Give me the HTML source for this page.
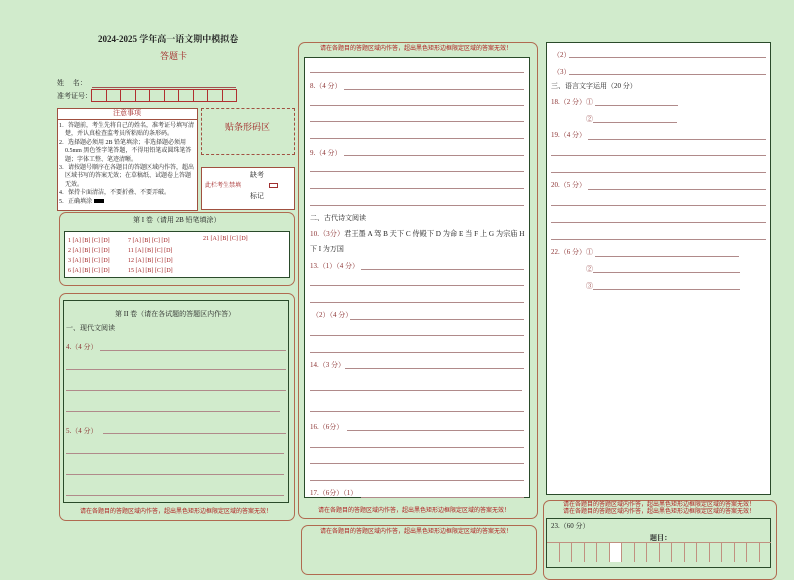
<!DOCTYPE html>
<html><head><meta charset="utf-8"><style>
*{margin:0;padding:0;box-sizing:border-box}
html,body{width:794px;height:562px}
body{background:#d1ebcc;position:relative;overflow:hidden;font-family:"Liberation Serif","Noto Serif CJK SC","Noto Sans CJK SC",serif;font-size:7px;color:#222}
.a{position:absolute;white-space:nowrap;line-height:1}
.r{color:#a02020}
.q{color:#8a3030}
.l{position:absolute;height:1px;background:#b08a8a}
.rb{position:absolute;border:1px solid #b06a50;border-radius:7px}
.wb{position:absolute;background:#fff;border:1px solid #2a4a2a}
.s{font-size:6px;color:#b02020;font-family:"Noto Sans CJK SC",sans-serif}
</style></head><body>
<div class="a" style="left:98px;top:35px;font-size:9px;font-weight:bold">2024-2025 学年高一语文期中模拟卷</div>
<div class="a r" style="left:160px;top:52px;font-size:9px">答题卡</div>
<div class="a" style="left:57px;top:80px">姓　 名：</div>
<div style="position:absolute;left:92px;top:87px;width:144px;height:1px;background:#a05050"></div>
<div class="a" style="left:57px;top:93px">准考证号：</div>
<div style="position:absolute;left:91px;top:89px;width:146px;height:13px;border:1px solid #b03030;display:flex">
<div style="flex:1;border-right:1px solid #b03030"></div><div style="flex:1;border-right:1px solid #b03030"></div><div style="flex:1;border-right:1px solid #b03030"></div><div style="flex:1;border-right:1px solid #b03030"></div><div style="flex:1;border-right:1px solid #b03030"></div><div style="flex:1;border-right:1px solid #b03030"></div><div style="flex:1;border-right:1px solid #b03030"></div><div style="flex:1;border-right:1px solid #b03030"></div><div style="flex:1;border-right:1px solid #b03030"></div><div style="flex:1"></div></div>
<div style="position:absolute;left:57px;top:108px;width:141px;height:103px;background:#fff;border:1px solid #a05040"></div>
<div style="position:absolute;left:57px;top:119px;width:141px;height:1px;background:#a05040"></div>
<div class="a r" style="left:113px;top:110px;font-size:7px">注意事项</div>
<div class="a" style="left:59px;top:122px;font-size:6px;line-height:8.4px;white-space:normal;width:140px">1．答题前，考生先将自己的姓名，准考证号填写清<br>　楚，并认真检查监考员所粘贴的条形码。<br>2．选择题必须用 2B 铅笔填涂；非选择题必须用<br>　0.5mm 黑色签字笔答题，不得用铅笔或圆珠笔答<br>　题；字体工整、笔迹清晰。<br>3．请按题号顺序在各题目的答题区域内作答，超出<br>　区域书写的答案无效；在草稿纸、试题卷上答题<br>　无效。<br>4．保持卡面清洁，不要折叠、不要弄破。<br>5．正确填涂 <span style="display:inline-block;width:10px;height:4px;background:#000"></span></div>
<div style="position:absolute;left:201px;top:108px;width:94px;height:47px;border:1px dashed #a05040"></div>
<div class="a r" style="left:225px;top:123px;font-size:9px">贴条形码区</div>
<div style="position:absolute;left:201px;top:167px;width:94px;height:43px;border:1px solid #a05040;background:#fff"></div>
<div class="a" style="left:250px;top:172px">缺考</div>
<div class="a r" style="left:205px;top:183px;font-size:6px">此栏考生禁填</div>
<div style="position:absolute;left:269px;top:183px;width:9px;height:5px;border:1px solid #a03030"></div>
<div class="a" style="left:250px;top:193px">标记</div>

<div class="rb" style="left:59px;top:212px;width:236px;height:74px"></div>
<div class="a" style="left:133px;top:217px">第 I 卷（请用 2B 铅笔填涂）</div>
<div class="wb" style="left:64px;top:231px;width:226px;height:47px"></div>
<div class="a r" style="left:68px;top:236px;font-size:6px;line-height:10px;white-space:pre">1 [A] [B] [C] [D]
2 [A] [B] [C] [D]
3 [A] [B] [C] [D]
6 [A] [B] [C] [D]</div>
<div class="a r" style="left:128px;top:236px;font-size:6px;line-height:10px;white-space:pre">7 [A] [B] [C] [D]
11 [A] [B] [C] [D]
12 [A] [B] [C] [D]
15 [A] [B] [C] [D]</div>
<div class="a r" style="left:203px;top:236px;font-size:6px">21 [A] [B] [C] [D]</div>

<div class="rb" style="left:59px;top:293px;width:236px;height:228px"></div>
<div style="position:absolute;left:63px;top:300px;width:226px;height:203px;border:1px solid #2a4a2a"></div>
<div class="a" style="left:115px;top:311px">第 II 卷（请在各试题的答题区内作答）</div>
<div class="a" style="left:66px;top:325px">一、现代文阅读</div>
<div class="a q" style="left:66px;top:344px">4.（4 分）</div>
<div class="l" style="left:100px;top:350px;width:186px"></div>
<div class="l" style="left:66px;top:369px;width:220px"></div>
<div class="l" style="left:66px;top:390px;width:220px"></div>
<div class="l" style="left:66px;top:411px;width:214px"></div>
<div class="a q" style="left:66px;top:428px">5.（4 分）</div>
<div class="l" style="left:103px;top:433px;width:183px"></div>
<div class="l" style="left:66px;top:453px;width:218px"></div>
<div class="l" style="left:66px;top:474px;width:218px"></div>
<div class="l" style="left:66px;top:495px;width:218px"></div>
<div class="a s" style="left:80px;top:508px">请在各题目的答题区域内作答，超出黑色矩形边框限定区域的答案无效！</div>

<div class="rb" style="left:298px;top:42px;width:240px;height:477px"></div>
<div class="a s" style="left:320px;top:45px">请在各题目的答题区域内作答，超出黑色矩形边框限定区域的答案无效！</div>
<div class="wb" style="left:304px;top:57px;width:226px;height:441px"></div>
<div class="l" style="left:310px;top:72px;width:214px"></div>
<div class="a q" style="left:310px;top:83px">8.（4 分）</div>
<div class="l" style="left:344px;top:89px;width:180px"></div>
<div class="l" style="left:310px;top:105px;width:214px"></div>
<div class="l" style="left:310px;top:121px;width:214px"></div>
<div class="l" style="left:310px;top:138px;width:214px"></div>
<div class="a q" style="left:310px;top:150px">9.（4 分）</div>
<div class="l" style="left:344px;top:155px;width:180px"></div>
<div class="l" style="left:310px;top:171px;width:214px"></div>
<div class="l" style="left:310px;top:188px;width:214px"></div>
<div class="l" style="left:310px;top:205px;width:214px"></div>
<div class="a" style="left:310px;top:215px">二、古代诗文阅读</div>
<div class="a" style="left:310px;top:231px;font-size:7.2px"><span class="q">10.（3分）</span>君王墨 A 驾 B 天下 C 侍殿下 D 为命 E 当 F 上 G 为宗庙 H</div>
<div class="a" style="left:310px;top:246px">下 I 为万国</div>
<div class="a q" style="left:310px;top:263px">13.（1）（4 分）</div>
<div class="l" style="left:361px;top:269px;width:163px"></div>
<div class="l" style="left:310px;top:285px;width:214px"></div>
<div class="l" style="left:310px;top:302px;width:214px"></div>
<div class="a q" style="left:312px;top:312px">（2）（4 分）</div>
<div class="l" style="left:350px;top:319px;width:174px"></div>
<div class="l" style="left:310px;top:335px;width:214px"></div>
<div class="l" style="left:310px;top:352px;width:214px"></div>
<div class="a q" style="left:310px;top:362px">14.（3 分）</div>
<div class="l" style="left:345px;top:368px;width:179px"></div>
<div class="l" style="left:310px;top:390px;width:212px"></div>
<div class="l" style="left:310px;top:411px;width:214px"></div>
<div class="a q" style="left:310px;top:424px">16.（6分）</div>
<div class="l" style="left:347px;top:430px;width:177px"></div>
<div class="l" style="left:310px;top:447px;width:214px"></div>
<div class="l" style="left:310px;top:463px;width:214px"></div>
<div class="l" style="left:310px;top:480px;width:214px"></div>
<div class="a q" style="left:310px;top:490px">17.（6分）（1）</div>
<div class="l" style="left:361px;top:497px;width:163px"></div>
<div class="a s" style="left:318px;top:507px">请在各题目的答题区域内作答，超出黑色矩形边框限定区域的答案无效！</div>
<div class="rb" style="left:301px;top:525px;width:236px;height:50px"></div>
<div class="a s" style="left:320px;top:528px">请在各题目的答题区域内作答，超出黑色矩形边框限定区域的答案无效！</div>

<div class="wb" style="left:546px;top:42px;width:225px;height:453px"></div>
<div class="a q" style="left:553px;top:52px">（2）</div>
<div class="l" style="left:569px;top:57px;width:197px"></div>
<div class="a q" style="left:553px;top:69px">（3）</div>
<div class="l" style="left:569px;top:74px;width:197px"></div>
<div class="a" style="left:551px;top:83px">三、语言文字运用（20 分）</div>
<div class="a q" style="left:551px;top:99px">18.（2 分）①</div>
<div class="l" style="left:595px;top:105px;width:83px"></div>
<div class="a q" style="left:586px;top:116px">②</div>
<div class="l" style="left:593px;top:122px;width:84px"></div>
<div class="a q" style="left:551px;top:132px">19.（4 分）</div>
<div class="l" style="left:588px;top:139px;width:178px"></div>
<div class="l" style="left:551px;top:155px;width:215px"></div>
<div class="l" style="left:551px;top:172px;width:215px"></div>
<div class="a q" style="left:551px;top:182px">20.（5 分）</div>
<div class="l" style="left:588px;top:189px;width:178px"></div>
<div class="l" style="left:551px;top:205px;width:215px"></div>
<div class="l" style="left:551px;top:222px;width:215px"></div>
<div class="l" style="left:551px;top:239px;width:215px"></div>
<div class="a q" style="left:551px;top:249px">22.（6 分）①</div>
<div class="l" style="left:595px;top:256px;width:144px"></div>
<div class="a q" style="left:586px;top:266px">②</div>
<div class="l" style="left:593px;top:272px;width:147px"></div>
<div class="a q" style="left:586px;top:283px">③</div>
<div class="l" style="left:593px;top:289px;width:147px"></div>

<div class="rb" style="left:543px;top:500px;width:234px;height:80px"></div>
<div class="a s" style="left:563px;top:501px">请在各题目的答题区域内作答，超出黑色矩形边框限定区域的答案无效！</div>
<div class="a s" style="left:563px;top:508px">请在各题目的答题区域内作答，超出黑色矩形边框限定区域的答案无效！</div>
<div style="position:absolute;left:546px;top:518px;width:225px;height:50px;border:1px solid #2a4a2a"></div>
<div class="a" style="left:551px;top:523px">23.（60 分）</div>
<div class="a" style="left:650px;top:535px;font-weight:bold">题目：</div>
<div style="position:absolute;left:547px;top:542px;width:224px;height:20px;display:flex;border-top:1px solid #c09080">
<div style="flex:1;border-right:1px solid #c09080"></div><div style="flex:1;border-right:1px solid #c09080"></div><div style="flex:1;border-right:1px solid #c09080"></div><div style="flex:1;border-right:1px solid #c09080"></div><div style="flex:1;border-right:1px solid #c09080"></div><div style="flex:1;background:#fff"></div><div style="flex:1;border-right:1px solid #c09080;border-left:1px solid #c09080"></div><div style="flex:1;border-right:1px solid #c09080"></div><div style="flex:1;border-right:1px solid #c09080"></div><div style="flex:1;border-right:1px solid #c09080"></div><div style="flex:1;border-right:1px solid #c09080"></div><div style="flex:1;border-right:1px solid #c09080"></div><div style="flex:1;border-right:1px solid #c09080"></div><div style="flex:1;border-right:1px solid #c09080"></div><div style="flex:1;border-right:1px solid #c09080"></div><div style="flex:1;border-right:1px solid #c09080"></div><div style="flex:1;border-right:1px solid #c09080"></div><div style="flex:1"></div></div>
</body></html>
